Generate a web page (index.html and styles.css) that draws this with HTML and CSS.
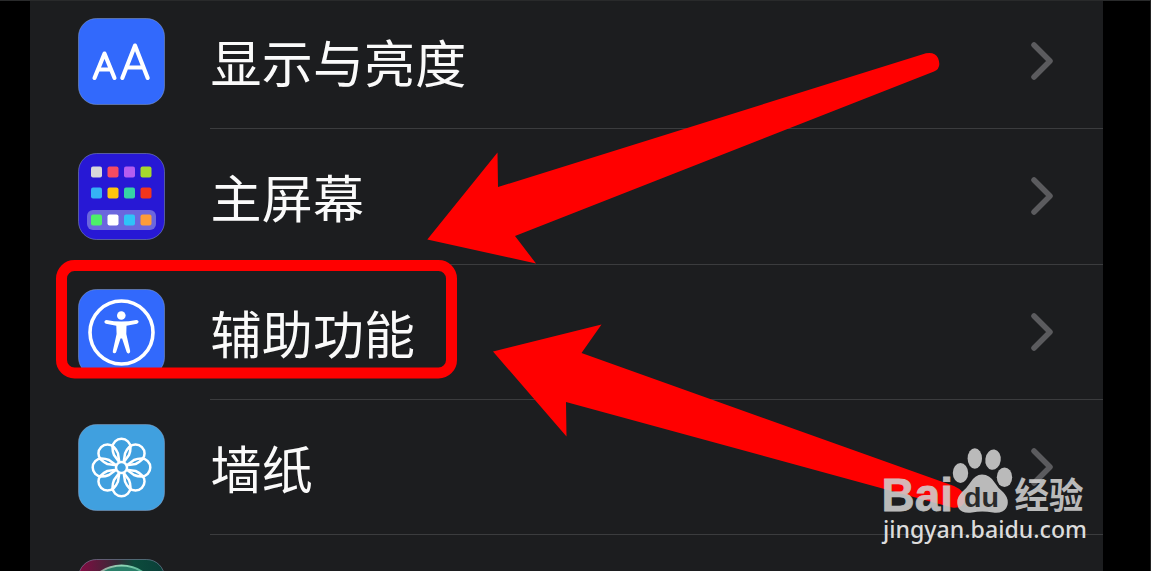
FILE: index.html
```html
<!DOCTYPE html>
<html lang="zh-CN">
<head>
<meta charset="utf-8">
<title>设置</title>
<link rel="stylesheet" href="styles.css">
</head>
<body>
<main class="screen">
  <ul class="list">
    <li class="row">
      <svg class="icon" viewBox="0 0 87 87">
        <rect class="tile tile-blue" x=".5" y=".5" width="86" height="86" rx="18"/>
        <g class="letters">
          <path d="M16.500 60 L26.500 35.500 L36.500 60 M20 51.500 H33"/>
          <path d="M44.300 60 L57 27.500 L69.700 60 M49 49.500 H65"/>
        </g>
      </svg>
      <div class="body"><span class="label">显示与亮度</span>
        <svg class="chevron" viewBox="0 0 24 40"><path d="M4 4 L20 20 L4 36"/></svg></div>
    </li>
    <li class="row">
      <svg class="icon" viewBox="0 0 87 87">
        <rect class="tile tile-home" x=".5" y=".5" width="86" height="86" rx="18"/>
        <rect x="9" y="57" width="69" height="20" rx="6" fill="#6b66de"/>
        <rect x="13" y="13.500" width="11" height="11" rx="2" fill="#d8d8da"/>
        <rect x="29.500" y="13.500" width="11" height="11" rx="2" fill="#f84b62"/>
        <rect x="46" y="13.500" width="11" height="11" rx="2" fill="#b45df0"/>
        <rect x="62.500" y="13.500" width="11" height="11" rx="2" fill="#a6d82c"/>
        <rect x="13" y="34.500" width="11" height="11" rx="2" fill="#35b1f5"/>
        <rect x="29.500" y="34.500" width="11" height="11" rx="2" fill="#ffc50c"/>
        <rect x="46" y="34.500" width="11" height="11" rx="2" fill="#36d3a6"/>
        <rect x="62.500" y="34.500" width="11" height="11" rx="2" fill="#f3351c"/>
        <rect x="13" y="61.500" width="11" height="11" rx="2" fill="#4df069"/>
        <rect x="29.500" y="61.500" width="11" height="11" rx="2" fill="#fff"/>
        <rect x="46" y="61.500" width="11" height="11" rx="2" fill="#2fc3f8"/>
        <rect x="62.500" y="61.500" width="11" height="11" rx="2" fill="#fb9c3a"/>
      </svg>
      <div class="body"><span class="label">主屏幕</span>
        <svg class="chevron" viewBox="0 0 24 40"><path d="M4 4 L20 20 L4 36"/></svg></div>
    </li>
    <li class="row">
      <svg class="icon" viewBox="0 0 87 87">
        <rect class="tile tile-blue" x=".5" y=".5" width="86" height="86" rx="18"/>
        <circle class="ring" cx="43.500" cy="43.500" r="31.500"/>
        <circle cx="43.300" cy="26.500" r="4.300" fill="#fff"/>
        <path fill="#fff" d="M28.500 31 Q43.300 34 58.300 31 Q60.300 30.900 60.600 32.600 Q60.700 34.200 59 34.700 L48.500 36.700 L48.300 45 L52.200 62 Q52.400 64 50.700 64.400 Q49.200 64.600 48.600 63 L44.100 49.500 H42.500 L38.200 63 Q37.600 64.600 36 64.300 Q34.300 63.900 34.800 62 L38.600 45 L38.300 36.700 L28 34.700 Q26.200 34.200 26.400 32.500 Q26.700 31 28.500 31Z"/>
      </svg>
      <div class="body"><span class="label">辅助功能</span>
        <svg class="chevron" viewBox="0 0 24 40"><path d="M4 4 L20 20 L4 36"/></svg></div>
    </li>
    <li class="row">
      <svg class="icon" viewBox="0 0 87 87">
        <defs><path id="petal" d="M41.500 38.500 L36 31 Q34.500 27.500 34.500 23.500 A9 8.800 0 0 1 52.500 23.500 Q52.500 27.500 51 31 L45.500 38.500"/></defs>
        <rect class="tile tile-sky" x=".5" y=".5" width="86" height="86" rx="18"/>
        <g class="flower">
          <circle cx="43.500" cy="43.500" r="5.500"/>
          <use href="#petal"/>
          <use href="#petal" transform="rotate(45 43.500 43.500)"/>
          <use href="#petal" transform="rotate(90 43.500 43.500)"/>
          <use href="#petal" transform="rotate(135 43.500 43.500)"/>
          <use href="#petal" transform="rotate(180 43.500 43.500)"/>
          <use href="#petal" transform="rotate(225 43.500 43.500)"/>
          <use href="#petal" transform="rotate(270 43.500 43.500)"/>
          <use href="#petal" transform="rotate(315 43.500 43.500)"/>
        </g>
      </svg>
      <div class="body"><span class="label">墙纸</span>
        <svg class="chevron" viewBox="0 0 24 40"><path d="M4 4 L20 20 L4 36"/></svg></div>
    </li>
    <li class="row">
      <svg class="icon" viewBox="0 0 87 87">
        <defs>
          <linearGradient id="siri"><stop offset="0" stop-color="#850b43"/><stop offset=".45" stop-color="#342a35"/><stop offset=".65" stop-color="#0c4b3c"/><stop offset="1" stop-color="#0a3e38"/></linearGradient>
          <linearGradient id="orb"><stop offset="0" stop-color="#a07884"/><stop offset=".5" stop-color="#91d8b8"/><stop offset="1" stop-color="#299c7b"/></linearGradient>
        </defs>
        <rect class="tile" x=".5" y=".5" width="86" height="86" rx="18" fill="url(#siri)"/>
        <circle cx="43.500" cy="43.500" r="37" fill="#2a7f69" stroke="url(#orb)" stroke-width="2"/>
      </svg>
      <div class="body"></div>
    </li>
  </ul>

  <svg class="markup" viewBox="0 0 1151 571">
    <rect x="61.500" y="265.500" width="390" height="107.500" rx="13"/>
    <path d="M427.300 239.500 L497.500 152.500 L498 187 L922 54.500 Q934 50.500 938 58 Q942 68 934 71.500 L515 236 L536 263.500Z"/>
    <path d="M493 351.500 L601.500 324.500 L581.500 353 L954 486 Q965 491 965 499 Q964 509 952 507.500 L566 402 L566.500 436.500Z"/>
  </svg>

  <svg class="watermark" viewBox="870 435 230 120">
    <g class="mark">
      <text class="bai" x="881.500" y="511" textLength="71.500" lengthAdjust="spacingAndGlyphs">Bai</text>
      <ellipse cx="960.500" cy="473" rx="7.700" ry="10"/>
      <ellipse cx="974.800" cy="458.500" rx="7.200" ry="10.200"/>
      <ellipse cx="993" cy="459.700" rx="7.700" ry="10.200" transform="rotate(8 993 460)"/>
      <ellipse cx="1004.500" cy="477.300" rx="7.700" ry="9.800"/>
      <path d="M982 474.500 Q990 474.500 995 483 Q998 488 1003 492 Q1009 498 1007.500 505 Q1005 514 993 512.500 Q982 510.500 972 512.500 Q959 514 957.500 505 Q956 498 962 492 Q966 489 970 483 Q975 474.500 982 474.500Z"/>
      <text class="jy" x="1014.500" y="508.500" textLength="69" lengthAdjust="spacingAndGlyphs">经验</text>
    </g>
    <text class="du" x="964" y="506.500" textLength="35" lengthAdjust="spacingAndGlyphs">du</text>
    <text class="url" x="883" y="538" textLength="204" lengthAdjust="spacingAndGlyphs">jingyan.baidu.com</text>
  </svg>
</main>
</body>
</html>
```
FILE: styles.css
```css
* { box-sizing: border-box; }
body { margin: 0; background: #000; }
.screen {
  position: relative;
  width: 1151px;
  height: 571px;
  overflow: hidden;
  padding: 0 48px 0 30px;
  background: #000;
  border-right: 1px solid #222;
  border-top: 1px solid #292a2b;
  font-family: "Noto Sans CJK SC", sans-serif;
}
.list {
  list-style: none;
  margin: -7px 0 0;
  padding: 0;
  width: 1073px;
  background: #1c1d1f;
  display: flex;
  flex-direction: column;
  clip-path: inset(7px 0 0);
}
.row {
  flex: none;
  display: flex;
  align-items: center;
  height: 135.300px;
  padding-left: 48px;
}
.icon { width: 87px; height: 87px; flex: none; }
.body {
  flex: 1;
  height: 100%;
  margin-left: 45px;
  padding-right: 49px;
  display: flex;
  align-items: center;
  justify-content: space-between;
  border-bottom: 1px solid #3b3c3e;
}
.label {
  color: #fafafa;
  font-size: 51px;
  line-height: 74px;
  letter-spacing: .2px;
  padding-left: .5px;
}
.chevron { width: 24px; height: 40px; }
.chevron path { fill: none; stroke: #5b5b5e; stroke-width: 5.500; stroke-linecap: round; stroke-linejoin: round; }
.tile { stroke: rgba(150, 170, 205, .45); stroke-width: 1; }
.tile-blue { fill: #3269fc; }
.tile-home { fill: #2718d5; }
.tile-sky { fill: #40a0df; }
.letters { fill: none; stroke: #fff; stroke-width: 4.100; stroke-linecap: round; stroke-linejoin: round; }
.ring { fill: none; stroke: #fff; stroke-width: 3.600; }
.flower { fill: none; stroke: #fff; stroke-width: 2.500; stroke-linejoin: round; }
.markup { position: absolute; left: 0; top: -1px; width: 1151px; height: 571px; fill: #f00; }
.markup rect { fill: none; stroke: #f00; stroke-width: 11; }
.watermark { position: absolute; left: 870px; top: 434px; width: 230px; height: 120px; }
.mark { fill: #d2d2d2; opacity: .87; }
.bai { font: 700 47px "Liberation Sans", sans-serif; stroke: #d2d2d2; stroke-width: .8; }
.jy { font: 700 36px "Noto Sans CJK SC", sans-serif; }
.du { font: 700 28px "Liberation Sans", sans-serif; fill: #292a2b; }
.url { font: 500 24px "Noto Sans", sans-serif; fill: #dcdcdc; }
```
